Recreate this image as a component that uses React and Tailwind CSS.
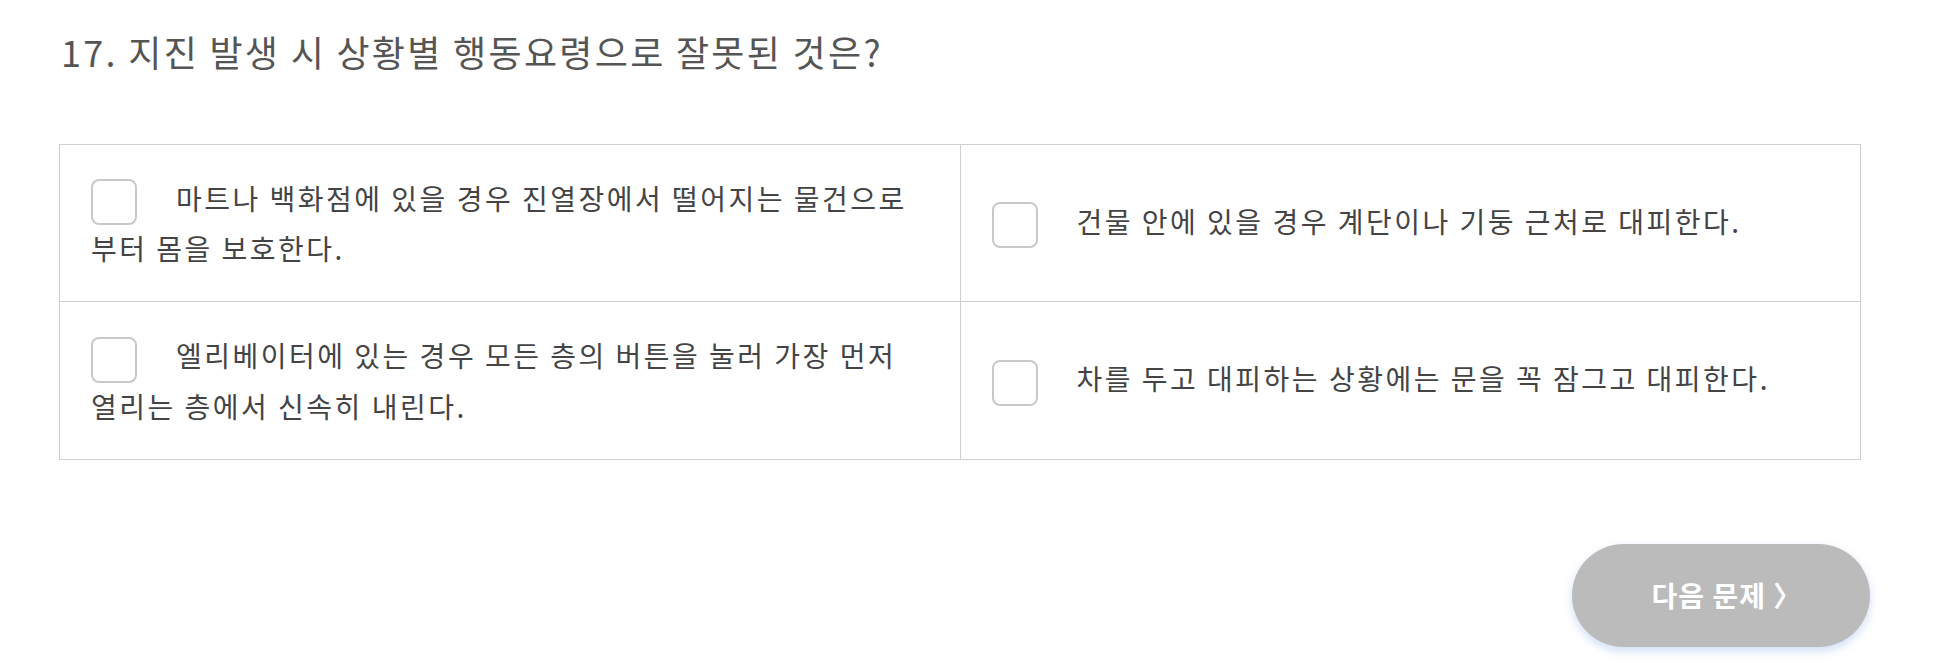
import React from 'react';

const OPTIONS = [
  '마트나 백화점에 있을 경우 진열장에서 떨어지는 물건으로부터 몸을 보호한다.',
  '건물 안에 있을 경우 계단이나 기둥 근처로 대피한다.',
  '엘리베이터에 있는 경우 모든 층의 버튼을 눌러 가장 먼저 열리는 층에서 신속히 내린다.',
  '차를 두고 대피하는 상황에는 문을 꼭 잠그고 대피한다.',
];

const FONT = { fontFamily: '"Noto Sans CJK KR", "Noto Sans", sans-serif' };

const OptionCell = ({ text }) => (
  <div className="flex items-center border-r border-b border-[#cfcfcf] px-[31px] py-[30px]">
    <div className="text-[28px] leading-[46px] tracking-[2.5px] text-[#444]">
      <span className="inline-block w-[46px] h-[46px] mr-[39px] align-middle rounded-[8px] border-2 border-[#c9c9c9] bg-white" />
      {text}
    </div>
  </div>
);

export default function App() {
  return (
    <div className="w-full h-[667px] bg-white pl-[59px] pt-[26px]" style={FONT}>
      <h2 className="text-[36px] leading-[51px] tracking-[2.3px] text-[#555] pl-[2px]">
        17. 지진 발생 시 상황별 행동요령으로 잘못된 것은?
      </h2>
      <div className="mt-[67px] w-[1802px] grid grid-cols-2 border-t border-l border-[#cfcfcf]">
        {OPTIONS.map((text) => (
          <OptionCell key={text} text={text} />
        ))}
      </div>
      <div className="w-[1811px] flex justify-end mt-[84px]">
        <button className="w-[298px] h-[103px] pl-[12px] rounded-full bg-[#bbbbbb] text-white text-[28px] tracking-[1px] font-bold shadow-[0_4px_10px_rgba(120,160,230,0.35)]">
          다음 문제 〉
        </button>
      </div>
    </div>
  );
}
